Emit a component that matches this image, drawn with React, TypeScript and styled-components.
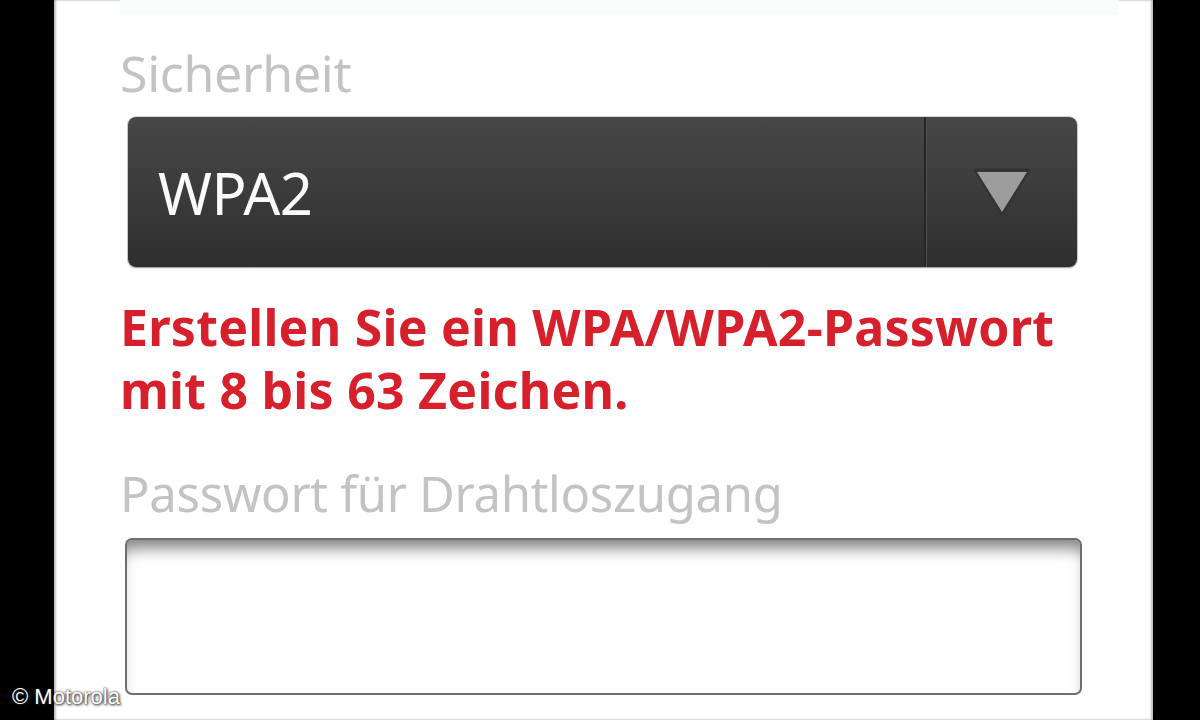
import React, { useState } from 'react';
import styled, { createGlobalStyle } from 'styled-components';

const GlobalStyle = createGlobalStyle`
  html, body {
    margin: 0;
    padding: 0;
    background: #000;
  }
  body {
    font-family: "Noto Sans", "Open Sans", sans-serif;
  }
`;

const Frame = styled.div`
  position: relative;
  display: flex;
  width: 1200px;
  height: 720px;
  overflow: hidden;
  background: #000;
`;

const Bezel = styled.div<{ $width: number }>`
  flex: 0 0 ${(p) => p.$width}px;
  background: #000;
`;

const Screen = styled.div`
  flex: 1;
  background: #fff;
  display: flex;
  flex-direction: column;
  padding: 0 0 0 66px;
  box-shadow: inset 2px 0 2px rgba(0, 0, 0, 0.25), inset -2px 0 2px rgba(0, 0, 0, 0.25);
`;

const PrevFieldEdge = styled.div`
  height: 15px;
  margin-right: 34px;
  background: #f7fdfa;
`;

const Label = styled.div<{ $top: number; $size: number }>`
  margin-top: ${(p) => p.$top}px;
  font-size: ${(p) => p.$size}px;
  line-height: 60px;
  color: #c3c3c3;
  letter-spacing: -0.3px;
`;

const Select = styled.div`
  display: flex;
  margin: 14px 0 0 8px;
  width: 949px;
  height: 150px;
  border-radius: 8px;
  background: linear-gradient(#474747, #2f2f2f);
  box-shadow: 0 0 0 1px rgba(0, 0, 0, 0.15), 0 1px 2px rgba(0, 0, 0, 0.3);
  overflow: hidden;
`;

const SelectValue = styled.div`
  flex: 1;
  display: flex;
  align-items: center;
  padding-left: 30px;
  font-size: 58px;
  color: #fafafa;
  letter-spacing: -0.5px;
`;

const SelectButton = styled.div`
  flex: 0 0 151px;
  display: flex;
  align-items: center;
  justify-content: center;
  border-left: 2px solid #262626;
  box-shadow: inset 1px 0 0 #505050;
`;

const ErrorText = styled.div`
  margin-top: 29px;
  font-size: 50px;
  line-height: 63px;
  font-weight: 700;
  color: #d6202b;
  letter-spacing: 0.25px;
`;

const PasswordInput = styled.input`
  display: block;
  box-sizing: border-box;
  margin: 15px 0 0 5px;
  width: 957px;
  height: 157px;
  border: 2px solid #6e6e6e;
  border-radius: 7px;
  background: #fff;
  box-shadow: inset 0 16px 16px -8px rgba(0, 0, 0, 0.5);
  font-family: inherit;
  font-size: 50px;
  padding: 0 24px;
  outline: none;
`;

const Watermark = styled.div`
  position: absolute;
  left: 12px;
  bottom: 10px;
  font-family: "Liberation Sans", Arial, sans-serif;
  font-size: 22px;
  color: #fff;
  text-shadow: 0 0 2px #222, 1px 1px 3px #222;
`;

const DropArrow = () => (
  <svg width="60" height="52" viewBox="0 0 60 52">
    <polygon points="3,4 57,4 30,48" fill="none" stroke="#333" strokeWidth="3" strokeLinejoin="round" />
    <polygon points="5,6 55,6 30,46" fill="#9d9d9d" />
  </svg>
);

const App = () => {
  const [password, setPassword] = useState('');

  return (
    <Frame>
      <GlobalStyle />
      <Bezel $width={54} />
      <Screen>
        <PrevFieldEdge />
        <Label $top={28} $size={50}>Sicherheit</Label>
        <Select>
          <SelectValue>WPA2</SelectValue>
          <SelectButton>
            <DropArrow />
          </SelectButton>
        </Select>
        <ErrorText>
          Erstellen Sie ein WPA/WPA2-Passwort
          <br />
          mit 8 bis 63 Zeichen.
        </ErrorText>
        <Label $top={41} $size={49}>Passwort für Drahtloszugang</Label>
        <PasswordInput
          type="password"
          value={password}
          onChange={(e) => setPassword(e.target.value)}
        />
      </Screen>
      <Bezel $width={47} />
      <Watermark>© Motorola</Watermark>
    </Frame>
  );
};

export default App;
